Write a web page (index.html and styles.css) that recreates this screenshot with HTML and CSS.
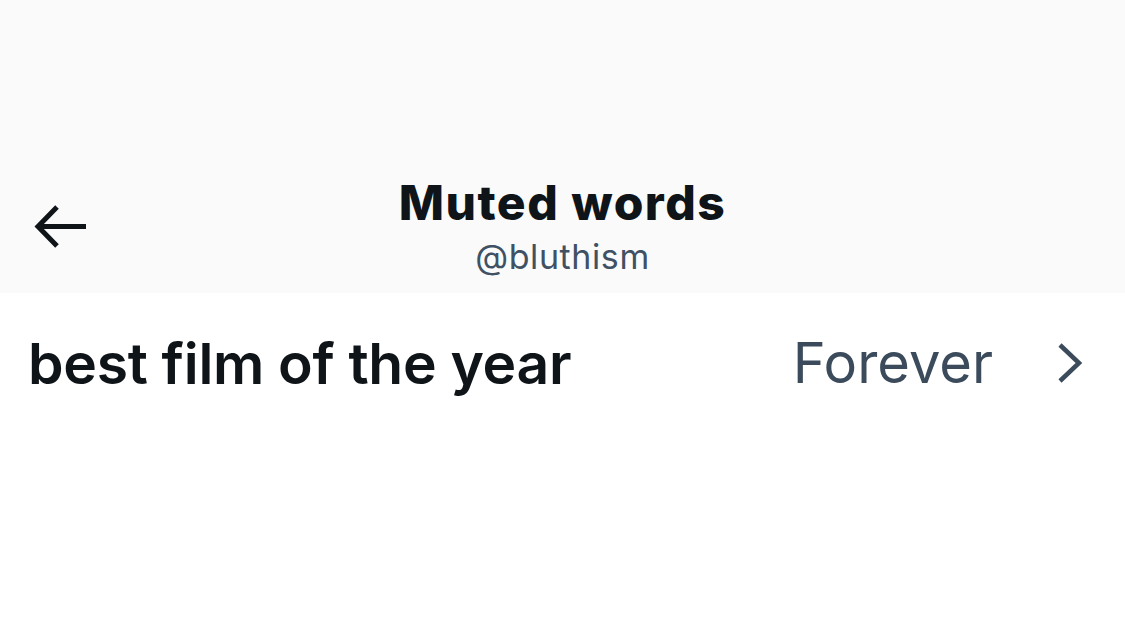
FILE: index.html
```html
<!DOCTYPE html>
<html>
<head>
<meta charset="utf-8">
<link rel="stylesheet" href="styles.css">
</head>
<body>
<div class="status"></div>
<header class="nav">
  <div class="back">
    <svg width="54" height="45" viewBox="0 0 54 45"><path d="M52 22.5H4M23 3L4 22.5 23 42" fill="none" stroke="#0f1419" stroke-width="5"/></svg>
  </div>
  <div class="titles">
    <div class="title">Muted words</div>
    <div class="handle">@bluthism</div>
  </div>
</header>
<main class="list">
  <div class="row">
    <div class="word">best film of the year</div>
    <div class="dur">Forever</div>
    <svg class="chev" width="26" height="40" viewBox="0 0 26 40"><path d="M3 2L22 20 3 38" fill="none" stroke="#3b4b5c" stroke-width="4.5"/></svg>
  </div>
</main>
</body>
</html>
```

FILE: styles.css
```css
html, body {
  margin: 0;
  padding: 0;
  background: #ffffff;
  font-family: Inter, "Noto Sans", sans-serif;
}
.status {
  height: 128px;
  background: #fafafb;
}
.nav {
  height: 165px;
  background: #fafafb;
  position: relative;
  display: flex;
  align-items: center;
  justify-content: center;
}
.back {
  position: absolute;
  left: 34px;
  top: 76px;
  width: 54px;
  height: 45px;
}
.back svg { display: block; }
.titles {
  display: flex;
  flex-direction: column;
  align-items: center;
  margin-top: 30px;
}
.title {
  font-size: 48px;
  font-weight: 800;
  color: #0f1419;
  line-height: 56px;
  letter-spacing: 1.5px;
}
.handle {
  font-size: 34px;
  font-weight: 400;
  color: #405163;
  line-height: 40px;
  letter-spacing: 0.6px;
  margin-top: 6px;
}
.list {
  background: #ffffff;
}
.row {
  display: flex;
  align-items: center;
  height: 140px;
  padding: 0 42px 0 28px;
}
.word {
  flex: 1;
  font-size: 57px;
  font-weight: 600;
  color: #0f1419;
  letter-spacing: -0.3px;
}
.dur {
  font-size: 56px;
  font-weight: 400;
  color: #3b4b5c;
  margin-right: 64px;
}
.chev { display: block; }
```
